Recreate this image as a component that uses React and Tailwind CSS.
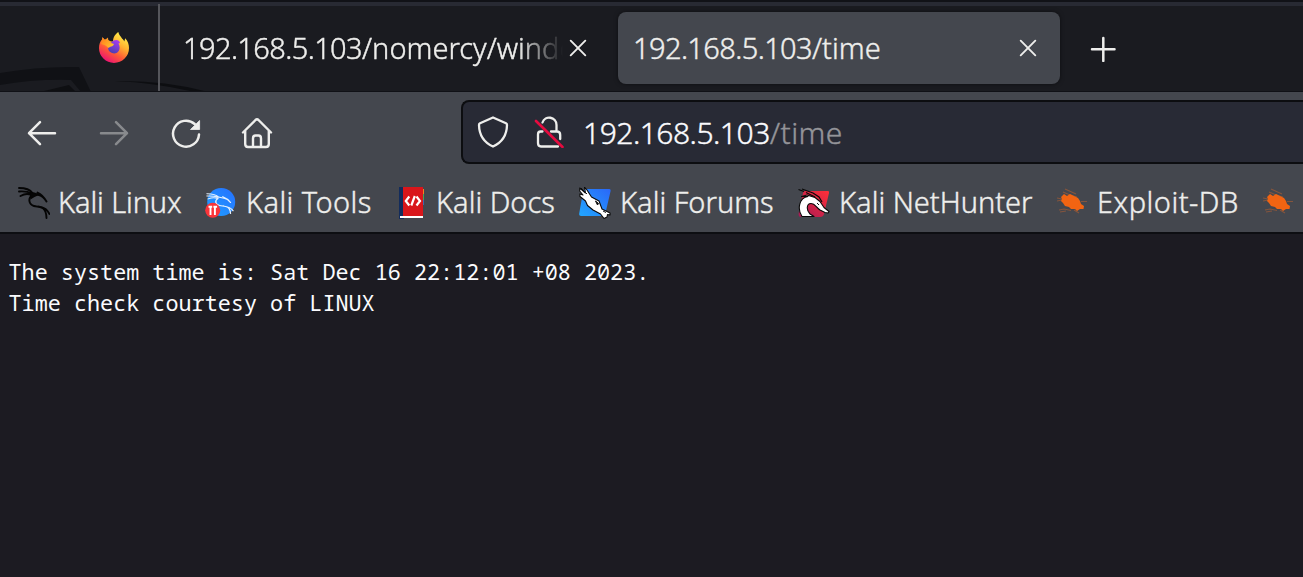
const UI = "font-['Noto_Sans','Open_Sans',sans-serif] font-light [-webkit-text-stroke-width:0.4px]";

function Firefox() {
  return (
    <svg className="block h-8 w-8" viewBox="0 0 32 32">
      <defs>
        <linearGradient id="fxBody" x1="0.85" y1="0.1" x2="0.3" y2="1">
          <stop offset="0" stopColor="#fff04a" />
          <stop offset="0.35" stopColor="#ffb02f" />
          <stop offset="0.65" stopColor="#ff5a36" />
          <stop offset="1" stopColor="#ec0f76" />
        </linearGradient>
        <linearGradient id="fxGlobe" x1="0.7" y1="0" x2="0.3" y2="1">
          <stop offset="0" stopColor="#a63cf0" />
          <stop offset="1" stopColor="#4a3fae" />
        </linearGradient>
        <linearGradient id="fxHead" x1="0" y1="0" x2="1" y2="0.6">
          <stop offset="0" stopColor="#ff7a1c" />
          <stop offset="1" stopColor="#ffc02b" />
        </linearGradient>
      </defs>
      <path d="M20.3 0 C21 3 22.5 4 24 6.500 C25.200 7.300 26 8.500 26.300 9.500 L27.200 6.200 C30 9 31 12.500 31 16 A15 15 0 0 1 1 16 C1 12.500 2 9.500 4 7.500 L4.500 5.300 L6.500 7.600 C10 7 12 10 15 9.500 C15 5 17.500 2 20.300 0Z" fill="url(#fxBody)" />
      <path d="M15.500 8.500 C19 7 21.500 8.500 22 11 L20.500 11.500 C24 18 19 23 14 21 C10 19.500 9 15.500 11 12.500Z" fill="url(#fxGlobe)" />
      <path d="M3.200 12 C3.800 9.500 4 7.500 4.500 5.300 L6.800 8 L10 5.500 C10 8 10.700 9.500 12.500 10.800 L16 12 C15 15 11.500 14.500 10.500 16 C8 13 5 12.500 3.200 12Z" fill="url(#fxHead)" />
    </svg>
  );
}

function Cross() {
  return (
    <svg className="block h-[18px] w-[18px]" viewBox="0 0 18 18" fill="none" stroke="#eeeeec" strokeWidth="1.9" strokeLinecap="round">
      <path d="M1.700 1.700 16.300 16.300 M16.300 1.700 1.700 16.300" />
    </svg>
  );
}

function Arrow({ className }) {
  return (
    <svg className={className} viewBox="0 0 32 32" fill="none" stroke="#eeeeec" strokeWidth="2.5" strokeLinecap="round" strokeLinejoin="round">
      <path d="M29 16.200H3 M14 5.200 3 16.200 14 27.200" />
    </svg>
  );
}

function Reload() {
  return (
    <svg className="block h-8 w-8" viewBox="0 0 32 32" fill="none">
      <path d="M29 17.500 A13 13 0 1 1 24.700 7" stroke="#eeeeec" strokeWidth="2.5" strokeLinecap="round" />
      <path d="M29.600 3.500V12.500H20.500Z" fill="#eeeeec" stroke="#eeeeec" strokeWidth="0.8" strokeLinejoin="round" />
    </svg>
  );
}

function Home() {
  return (
    <svg className="block h-8 w-8" viewBox="0 0 32 32" fill="none" stroke="#eeeeec" strokeWidth="2.400" strokeLinecap="round" strokeLinejoin="round">
      <path d="M2 15.500 L14.500 3 Q16 1.600 17.500 3 L30 15.500 M4.200 14V27Q4.200 30 7 30H25Q27.800 30 27.800 27V14 M12 29.500V21.500Q12 18.500 14.500 18.500H17.500Q20 18.500 20 21.500V29.500" />
    </svg>
  );
}

function Shield() {
  return (
    <svg className="block h-8 w-8" viewBox="0 0 32 32" fill="none" stroke="#eeeeec" strokeWidth="2.300" strokeLinejoin="round">
      <path d="M16 1.500 29 7.300Q30 7.800 30 9C29.800 18.500 26 26 16 30.500C6 26 2.200 18.500 2 9Q2 7.800 3 7.300Z" />
    </svg>
  );
}

function BrokenLock() {
  return (
    <svg className="block h-8 w-8" viewBox="0 0 32 32" fill="none" strokeLinecap="round">
      <path d="M9.500 6.500C12 -1 23.500 0.500 23.500 9V15M9.500 15.500H7.500Q5 15.500 5 18.500V27Q5 30.500 8 30.500H25M18 15.500H24Q27.200 15.500 27.200 19V23" stroke="#eeeeec" strokeWidth="2.300" />
      <path d="M3 5 29.500 31" stroke="#e60b3f" strokeWidth="2.600" />
    </svg>
  );
}

const DRAGON = "M1 1C7 1 12 2.500 14.500 6L21 8C25 9 27 12 28.500 14.500M1 4.500C7 4 10 4.500 14 6.500M2.500 9C7 6.500 10 6.500 13 8M19.500 5.500C23 7 26 10 28.500 14.500M14 8.500C10 11 10.500 17.500 16 19C21 20.500 28 18 28.500 31M20 19.500C26 20.500 29 22 31.500 27";

function KaliLinux() {
  return (
    <svg className="block h-8 w-8" viewBox="0 0 32 32" fill="none">
      <path d={DRAGON} stroke="#050505" strokeWidth="1.900" strokeLinecap="round" strokeLinejoin="round" />
      <path d="M12.500 5.500 21 8 16.500 10 12.500 12.500Z M23 19.500 29 22 28 25Z" fill="#050505" />
    </svg>
  );
}

function KaliTools() {
  return (
    <svg className="block h-8 w-8" viewBox="0 0 32 32" fill="none">
      <defs>
        <linearGradient id="toolsBlue" x1="1" y1="0" x2="0" y2="1">
          <stop offset="0" stopColor="#2670ff" />
          <stop offset="1" stopColor="#1fa0ff" />
        </linearGradient>
      </defs>
      <circle cx="16.200" cy="15" r="14" fill="url(#toolsBlue)" />
      <g transform="translate(1 6) scale(.86 .66)">
        <path d={DRAGON} stroke="#e7f3ff" strokeWidth="1.500" strokeLinecap="round" />
      </g>
      <circle cx="7.700" cy="23.300" r="7.500" fill="#fa3439" />
      <path d="M3.500 19.700H7.200M8.400 19.700H12.100M5.500 20V28M9.900 20V28" stroke="#fff" strokeWidth="1.900" />
    </svg>
  );
}

function KaliDocs() {
  return (
    <svg className="block h-8 w-8" viewBox="0 0 32 32" fill="none">
      <path d="M2 0H7V32H2Z" fill="#132c5c" />
      <path d="M26 2h1v5h-1z" fill="#f58220" />
      <path d="M26 7h1v6h-1z" fill="#46a45b" />
      <path d="M26 13h1v5h-1z" fill="#3f69ae" />
      <path d="M6 0H26V29H6Z" fill="#d9161b" />
      <path d="M3 29H26V31H3Z" fill="#fff" />
      <path d="M12.300 9.500 8.800 14 12.300 18.500M19.500 9.500 23 14 19.500 18.500M17.800 9 14.300 18.500" stroke="#fff" strokeWidth="2.200" />
    </svg>
  );
}

function KaliForums() {
  return (
    <svg className="block h-8 w-8" viewBox="0 0 32 32" fill="none">
      <defs>
        <linearGradient id="forumBlue" x1="1" y1="0" x2="0" y2="1">
          <stop offset="0" stopColor="#2a67f8" />
          <stop offset="1" stopColor="#22a7ff" />
        </linearGradient>
      </defs>
      <path d="M7 2H30Q32 2 31.600 4L26.500 26Q26 29 23 29H2Q-.3 29 .2 26.500L4 5Q4.600 2 7 2Z" fill="url(#forumBlue)" />
      <path d="M5.500 .3 8 3 12.500 10 20 14 23 22 31 26V28L28.500 27.500 28 30 25 31.500 21.500 27 14 23 8.500 18.500 6.500 14 1 9.500 .8 7 4 8 .7 4 .7 1 6.500 6Z" fill="#fff" stroke="#090909" strokeWidth="1.100" strokeLinejoin="round" />
      <path d="M16.500 14 19.500 16.500 18.500 18Z M24 24 27 25.500 M2 1 8 7" fill="#111" stroke="#111" />
    </svg>
  );
}

function NetHunter() {
  return (
    <svg className="block h-8 w-8" viewBox="0 0 32 32" fill="none">
      <defs>
        <linearGradient id="hunterRed" x1="1" y1="0" x2="0" y2="1">
          <stop offset="0" stopColor="#ff3038" />
          <stop offset="1" stopColor="#a51955" />
        </linearGradient>
      </defs>
      <path d="M7 4H30Q31.500 4 31 6L26 27Q25.400 30 22 30H3Q0 30 .7 26L5 6Q5.400 4 7 4Z" fill="url(#hunterRed)" />
      <path d="M3.500 9.500 10 9.500C1 11 -1 22 4 29.500H16L12 27C8 23 8.500 16.500 13 16.500C17 16.500 18 20 22 23L27 25.500 30 26 31 24.500 26 20.500 22 14.500 17 10.500 9 8Z" fill="#fff" stroke="#080808" strokeWidth="1.100" strokeLinejoin="round" />
      <path d="M.5 2.500 6 4.500M4 2 15 6 21 10 24 15M8 5.500 17 10" stroke="#080808" strokeWidth="1.200" />
      <path d="M19 16 21 18" stroke="#111" />
    </svg>
  );
}

function ExploitBug() {
  return (
    <svg className="block h-8 w-8 shrink-0" viewBox="0 0 32 32" fill="none">
      <path d="M7 5 14 8 21 10M9 2 20 7M1 11 6 12M1 14 6 13M25 14.500 31 14.500M3 23 8 22 15 23.500M4 25 10 24M18 23 23 26" stroke="#b9612f" strokeWidth="1.200" opacity=".55" />
      <path d="M5 10 8 7 11 9 14 7 18 9 22 11 24 14 25 17 28 19 27.500 22 24 22 21 24 19 22 15 22 13 20 9 19 7 16 5 14 6 12Z" fill="#f26412" />
    </svg>
  );
}

function Bookmark({ icon, text, className }) {
  return (
    <div className={`flex shrink-0 items-center ${className}`}>
      {icon}
      <span className="-mt-px whitespace-pre text-[29px] leading-10">{text}</span>
    </div>
  );
}

function TabStrip() {
  return (
    <div className="relative h-[92px] overflow-hidden border-b border-[#101116] bg-[#1a1b20]">
      <svg className="absolute left-0 top-0 h-[92px] w-[230px]" viewBox="0 0 230 92" fill="none">
        <path d="M0 73Q40 66 79 67L91 92H81L71 80Q34 79 0 85Z" fill="#101115" />
        <path d="M40 92 69 85 76 92Z" fill="#0e0f12" />
        <path d="M115 81Q165 80 208 92H194Q158 83 115 81Z" fill="#0d0e11" />
      </svg>
      <div className="relative flex h-full flex-col">
        <div className="h-[6px] shrink-0 border-t-2 border-[#111217] bg-[#282a33]" />
        <div className="flex grow">
          <div className="-mt-0.5 flex w-[160px] shrink-0 justify-end border-r-2 border-[#55565b] pr-[28px] pt-7">
            <Firefox />
          </div>
          <div className="flex h-[84px] w-[458px] shrink-0 pl-[23px]">
            <div className="mt-[22px] h-10 w-[382px] whitespace-nowrap text-[29px] leading-10 [mask-image:linear-gradient(to_right,black_335px,transparent_380px)]">
              <span className="tracking-[-0.6px]">192.168.5.103</span>/nomercy/windo
            </div>
            <div className="ml-1 mt-[33px]"><Cross /></div>
          </div>
          <div className="mt-1.5 flex h-[72px] w-[442px] shrink-0 justify-between rounded-lg bg-[#44474e] pl-[15px] pr-[23px] shadow-[0_0_4px_rgba(0,0,0,0.5)]">
            <span className="mt-4 text-[29px] leading-10">
              <span className="tracking-[-0.6px]">192.168.5.103</span>/time
            </span>
            <div className="mt-[27px]"><Cross /></div>
          </div>
          <svg className="ml-[30px] mt-[30px] h-[26px] w-[26px]" viewBox="0 0 26 26" stroke="#eeeeec" strokeWidth="2.500" strokeLinecap="round">
            <path d="M2 13.300H24.500M13.300 2V25" />
          </svg>
        </div>
      </div>
    </div>
  );
}

export default function App() {
  return (
    <div className={`h-[577px] w-[1303px] overflow-hidden bg-[#1c1b22] text-[#eeeeec] ${UI}`}>
      <TabStrip />
      <div className="h-[142px] border-b-2 border-[#0d0e12] bg-[#44474e]">
        <div className="flex h-[82px] pt-2">
          <div className="flex w-[461px] shrink-0 gap-10 pl-[26px] pt-[17px]">
            <Arrow className="block h-8 w-8" />
            <Arrow className="block h-8 w-8 -scale-x-100 opacity-40" />
            <Reload />
            <div className="-ml-px"><Home /></div>
          </div>
          <div className="flex h-16 grow items-center rounded-l-lg border-2 border-r-0 border-[#0c0d10] bg-[#282a35] pl-[14px]">
            <Shield />
            <div className="ml-6"><BrokenLock /></div>
            <div className="ml-[18px] mt-0.5 whitespace-nowrap text-[30px] leading-10 text-[#fbfbfe]">
              <span className="tracking-[-0.5px]">192.168.5.103</span>
              <span className="tracking-[0.4px] text-[#949499]">/time</span>
            </div>
          </div>
        </div>
        <div className="flex h-[57px] items-center overflow-hidden pl-[18px]">
          <Bookmark icon={<KaliLinux />} text="Kali Linux" className="w-[187px] gap-[8px] tracking-[-0.1px]" />
          <Bookmark icon={<KaliTools />} text="Kali Tools" className="w-[192px] gap-[9px] tracking-[0.4px]" />
          <Bookmark icon={<KaliDocs />} text="Kali Docs" className="w-[182px] gap-[7px]" />
          <Bookmark icon={<KaliForums />} text="Kali Forums" className="w-[219px] gap-[9px]" />
          <Bookmark icon={<NetHunter />} text="Kali NetHunter" className="w-[258px] gap-[9px]" />
          <Bookmark icon={<ExploitBug />} text="Exploit-DB" className="w-[206px] gap-[9px] tracking-[0.5px]" />
          <ExploitBug />
        </div>
      </div>
      <pre className="pl-[8.5px] pt-[22px] font-['Noto_Sans_Mono','Noto_Sans_Mono_CJK_SC','DejaVu_Sans_Mono',monospace] text-[21.8px] font-normal leading-[31px] text-[#fbfbfe] [-webkit-text-stroke-width:0px]">
        {"The system time is: Sat Dec 16 22:12:01 +08 2023.\nTime check courtesy of LINUX"}
      </pre>
    </div>
  );
}
